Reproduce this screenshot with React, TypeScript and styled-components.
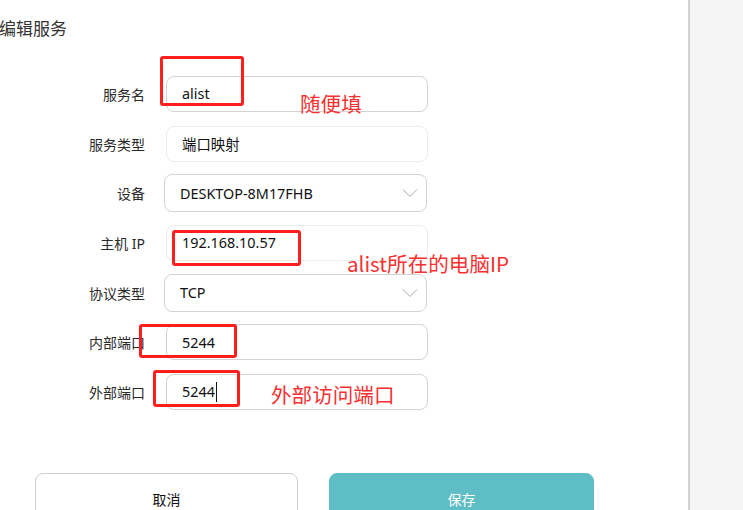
import React from "react";
import styled, { createGlobalStyle } from "styled-components";

const GlobalStyle = createGlobalStyle`
  html, body {
    margin: 0;
    padding: 0;
    background: #ffffff;
  }
  body {
    font-family: "Noto Sans", "Noto Sans CJK SC", sans-serif;
    color: #222;
  }
`;

// ===================== LAYOUT =====================
const Page = styled.div`
  display: flex;
  width: 743px;
  height: 510px;
  overflow: hidden;
`;

const Main = styled.div`
  position: relative;
  width: 690px;
  flex-shrink: 0;
  background: #ffffff;
  border-right: 2px solid #d4d4d4;
  box-sizing: border-box;
`;

const Side = styled.div`
  flex: 1;
  background: #f5f5f5;
`;

const Title = styled.h2`
  margin: 0;
  padding-top: 19px;
  margin-left: -1px;
  font-size: 17px;
  line-height: 20px;
  font-weight: 400;
  color: #333;
`;

// ===================== FORM =====================
const Form = styled.div`
  display: grid;
  grid-template-columns: 145px 262px;
  grid-auto-rows: 49.7px;
  column-gap: 21px;
  align-items: center;
  margin-top: 30px;
`;

const Label = styled.label`
  text-align: right;
  font-size: 14px;
  color: #2a2a2a;
  white-space: nowrap;
`;

const Field = styled.div<{ $muted?: boolean; $select?: boolean }>`
  position: relative;
  display: flex;
  align-items: center;
  box-sizing: border-box;
  height: ${({ $select }) => ($select ? "38px" : "36px")};
  margin-left: ${({ $select }) => ($select ? "-2px" : "0")};
  width: ${({ $select }) => ($select ? "263px" : "262px")};
  padding-left: 15px;
  border: 1px solid ${({ $muted }) => ($muted ? "#ececec" : "#d2d2d2")};
  border-radius: 8px;
  font-size: 14.4px;
  color: #111;
`;

const Caret = styled.span`
  display: inline-block;
  width: 1px;
  height: 20px;
  margin-left: 1px;
  background: #111;
`;

const Chevron = styled.svg`
  position: absolute;
  right: 8px;
  top: 50%;
  margin-top: -5px;
`;

// ===================== BUTTONS =====================
const Actions = styled.div`
  display: flex;
  gap: 31px;
  margin-top: 56px;
  padding-left: 35px;
`;

const Button = styled.button<{ $primary?: boolean }>`
  width: ${({ $primary }) => ($primary ? "265px" : "263px")};
  height: 53px;
  padding: 0;
  box-sizing: border-box;
  border-radius: 8px;
  font-family: inherit;
  font-size: 14px;
  cursor: pointer;
  border: 1px solid ${({ $primary }) => ($primary ? "#5fbdc5" : "#cfcfcf")};
  background: ${({ $primary }) => ($primary ? "#5fbdc5" : "#ffffff")};
  color: ${({ $primary }) => ($primary ? "#ffffff" : "#111")};
`;

// ===================== ANNOTATIONS =====================
const MarkBox = styled.div`
  position: absolute;
  box-sizing: border-box;
  border: 3px solid #ff1f1f;
  border-radius: 3px;
  pointer-events: none;
`;

const Note = styled.span`
  position: absolute;
  font-family: "Noto Sans CJK SC", sans-serif;
  font-size: 20.6px;
  line-height: 24px;
  color: #f73131;
  white-space: nowrap;
  pointer-events: none;
`;

const ChevronDown = () => (
  <Chevron width="16" height="10" viewBox="0 0 16 10">
    <path d="M1 1.5 L8 8.5 L15 1.5" fill="none" stroke="#a8a8a8" strokeWidth="1" />
  </Chevron>
);

const rows: { label: string; value: string; muted?: boolean; select?: boolean; caret?: boolean }[] = [
  { label: "服务名", value: "alist" },
  { label: "服务类型", value: "端口映射", muted: true },
  { label: "设备", value: "DESKTOP-8M17FHB", select: true },
  { label: "主机 IP", value: "192.168.10.57", muted: true },
  { label: "协议类型", value: "TCP", select: true },
  { label: "内部端口", value: "5244" },
  { label: "外部端口", value: "5244", caret: true },
];

const App: React.FC = () => {
  return (
    <>
      <GlobalStyle />
      <Page>
        <Main>
          <Title>编辑服务</Title>
          <Form>
            {rows.map((r) => (
              <React.Fragment key={r.label}>
                <Label>{r.label}</Label>
                <Field $muted={r.muted} $select={r.select}>
                  {r.value}
                  {r.caret && <Caret />}
                  {r.select && <ChevronDown />}
                </Field>
              </React.Fragment>
            ))}
          </Form>
          <Actions>
            <Button>取消</Button>
            <Button $primary>保存</Button>
          </Actions>

          {/* 红色标注 */}
          <MarkBox style={{ left: 160, top: 56, width: 84, height: 50 }} />
          <Note style={{ left: 300, top: 91 }}>随便填</Note>
          <MarkBox style={{ left: 172, top: 230, width: 129, height: 36 }} />
          <Note style={{ left: 347, top: 251 }}>alist所在的电脑IP</Note>
          <MarkBox style={{ left: 139, top: 324, width: 98, height: 34 }} />
          <MarkBox style={{ left: 153, top: 370, width: 87, height: 37 }} />
          <Note style={{ left: 271, top: 382 }}>外部访问端口</Note>
        </Main>
        <Side />
      </Page>
    </>
  );
};

export default App;
